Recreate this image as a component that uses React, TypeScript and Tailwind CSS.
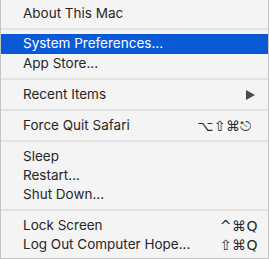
import React from "react";

type Item = {
  label: string;
  shortcut?: string;
  submenu?: boolean;
  active?: boolean;
  pad?: boolean;
};

const groups: Item[][] = [
  [{ label: "About This Mac" }],
  [{ label: "System Preferences...", active: true }, { label: "App Store..." }],
  [{ label: "Recent Items", submenu: true }],
  [{ label: "Force Quit Safari", shortcut: "⌥⇧⌘⎋", pad: true }],
  [{ label: "Sleep" }, { label: "Restart..." }, { label: "Shut Down..." }],
  [
    { label: "Lock Screen", shortcut: "^⌘Q" },
    { label: "Log Out Computer Hope...", shortcut: "⇧⌘Q" },
  ],
];

const MenuRow = ({ label, shortcut, submenu, active, pad }: Item) => (
  <div
    className={`flex items-center justify-between pl-[22px] pr-[10px] ${
      active ? "h-[20px] bg-[#0a5ad8] text-white" : "h-[19px] text-[#262626]"
    }`}
  >
    <span>{label}</span>
    {shortcut && (
      <span
        className={`font-['DejaVu_Sans',sans-serif] text-[14px] tracking-[0.5px] text-[#2a2a2a] ${
          pad ? "mr-[6px]" : ""
        }`}
      >
        {shortcut}
      </span>
    )}
    {submenu && (
      <svg width="9" height="10" viewBox="0 0 9 10" className="mr-[3px]">
        <polygon points="0,0 9,5 0,10" fill="#4a4a4a" />
      </svg>
    )}
  </div>
);

const Separator = ({ tall }: { tall: boolean }) => (
  <div className={`flex items-center ${tall ? "h-[12px]" : "h-[11px]"}`}>
    <div className="h-[2px] w-full bg-[#e2e2e2]" />
  </div>
);

export default function App() {
  return (
    <div className="w-[269px] h-[259px] bg-white">
      <div className="w-[269px] h-[259px] bg-[#f4f4f4] border-x border-b border-[#c4c4c4] pt-[4px] pb-[4px] font-['Inter',sans-serif] text-[13.5px] leading-none">
        {groups.map((g, gi) => (
          <div key={gi}>
            {gi > 0 && <Separator tall={gi !== 1} />}
            {g.map((it) => (
              <MenuRow key={it.label} {...it} />
            ))}
          </div>
        ))}
      </div>
    </div>
  );
}
